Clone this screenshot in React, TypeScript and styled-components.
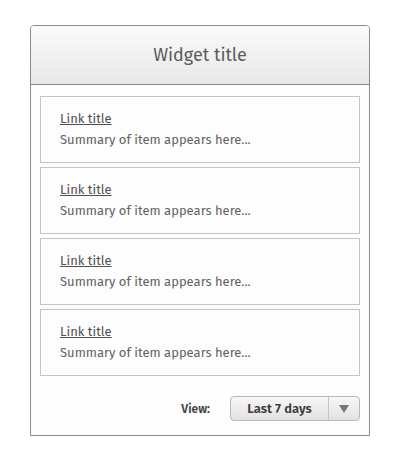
import React from "react";
import styled, { createGlobalStyle } from "styled-components";

const Global = createGlobalStyle`
  html, body { margin: 0; padding: 0; background: #ffffff; }
  body { font-family: "Fira Sans", Lato, "Noto Sans", sans-serif; }
`;

const Widget = styled.div`
  box-sizing: border-box;
  width: 340px;
  margin: 25px 0 0 30px;
  border: 1px solid #8a8a8a;
  border-radius: 4px 4px 0 0;
  background: #fdfdfd;
`;

const Header = styled.div`
  height: 58px;
  border-bottom: 1px solid #8a8a8a;
  border-radius: 3px 3px 0 0;
  background: linear-gradient(#fbfbfb, #e7e7e8);
  display: flex;
  align-items: center;
  justify-content: center;
  font-size: 18px;
  color: #5c5c5c;
`;

const List = styled.div`
  display: flex;
  flex-direction: column;
  gap: 4px;
  padding: 11px 9px 0 9px;
`;

const Item = styled.div`
  box-sizing: border-box;
  height: 67px;
  border: 1px solid #c4c4c4;
  background: #fdfdfd;
  padding: 13px 19px 0 19px;
  display: flex;
  flex-direction: column;
  gap: 4px;
`;

const Link = styled.a`
  font-size: 13px;
  line-height: 17px;
  color: #505050;
  text-decoration: underline;
  align-self: flex-start;
  &:visited { color: #505050; }
`;

const Summary = styled.div`
  font-size: 13px;
  line-height: 17px;
  color: #626262;
`;

const Footer = styled.div`
  display: flex;
  justify-content: flex-end;
  align-items: center;
  gap: 20px;
  padding: 20px 9px 14px 9px;
`;

const Label = styled.span`
  font-size: 12px;
  font-weight: 600;
  color: #444;
`;

const Select = styled.div`
  box-sizing: border-box;
  width: 130px;
  height: 25px;
  border: 1px solid #b8b8b8;
  border-radius: 4px;
  background: linear-gradient(#f7f7f7, #e2e2e2);
  display: flex;
  align-items: stretch;
`;

const SelectValue = styled.div`
  flex: 1;
  display: flex;
  align-items: center;
  justify-content: center;
  font-size: 13px;
  font-weight: 600;
  color: #3c3c3c;
  border-right: 1px solid #c4c4c4;
`;

const Arrow = styled.div`
  width: 30px;
  display: flex;
  align-items: center;
  justify-content: center;
`;

const items = [1, 2, 3, 4];

export default function App() {
  return (
    <>
      <Global />
      <Widget>
        <Header>Widget title</Header>
        <List>
          {items.map((i) => (
            <Item key={i}>
              <Link href="#">Link title</Link>
              <Summary>Summary of item appears here...</Summary>
            </Item>
          ))}
        </List>
        <Footer>
          <Label>View:</Label>
          <Select>
            <SelectValue>Last 7 days</SelectValue>
            <Arrow>
              <svg width="10" height="8" viewBox="0 0 10 8">
                <path d="M0 0 H10 L5 8 Z" fill="#777" />
              </svg>
            </Arrow>
          </Select>
        </Footer>
      </Widget>
    </>
  );
}
